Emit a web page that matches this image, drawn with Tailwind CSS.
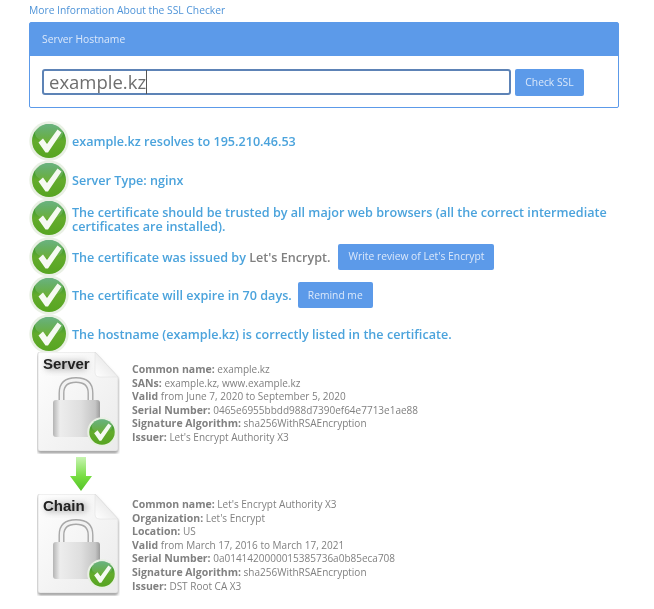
<!DOCTYPE html>
<html>
<head>
<meta charset="utf-8">
<script src="https://cdn.jsdelivr.net/npm/@tailwindcss/browser@4"></script>
</head>
<body class="bg-white font-['Open_Sans',sans-serif] text-[#808080]">
<svg width="0" height="0" class="absolute">
  <defs>
    <linearGradient id="g" x1="0" y1="0" x2="0" y2="1"><stop offset="0" stop-color="#1c8a3c"/><stop offset=".5" stop-color="#63ab2c"/><stop offset="1" stop-color="#57a521"/></linearGradient>
    <linearGradient id="gl" x1="0" y1="0" x2="0" y2="1"><stop offset="0" stop-color="#fff" stop-opacity=".35"/><stop offset="1" stop-color="#fff" stop-opacity=".05"/></linearGradient>
    <linearGradient id="doc" x1="0" y1="0" x2="1" y2="1"><stop offset="0" stop-color="#fefefe"/><stop offset="1" stop-color="#ebebeb"/></linearGradient>
    <linearGradient id="fold" x1="0" y1="1" x2="1" y2="0"><stop offset="0" stop-color="#fff"/><stop offset="1" stop-color="#dcdcdc"/></linearGradient>
    <linearGradient id="body" x1="0" y1="0" x2="1" y2="0"><stop offset="0" stop-color="#b4b4b4"/><stop offset=".15" stop-color="#ededed"/><stop offset=".6" stop-color="#dedede"/><stop offset=".9" stop-color="#c4c4c4"/><stop offset="1" stop-color="#9c9c9c"/></linearGradient>
    <linearGradient id="arrow" x1="0" y1="0" x2="0" y2="1"><stop offset="0" stop-color="#c8f4b2"/><stop offset=".6" stop-color="#74dc3e"/><stop offset="1" stop-color="#56c22a"/></linearGradient>
    <filter id="shadow" x="-20%" y="-20%" width="140%" height="140%"><feGaussianBlur stdDeviation="1.6"/></filter>
    <filter id="soft" x="-30%" y="-60%" width="160%" height="220%"><feGaussianBlur stdDeviation="3"/></filter>
    <symbol id="check" viewBox="0 0 40 40">
      <circle cx="20" cy="20" r="19.7" fill="#e9f0e4"/>
      <circle cx="20" cy="20" r="17" fill="url(#g)"/>
      <ellipse cx="20" cy="12" rx="14" ry="9" fill="url(#gl)"/>
      <path d="M9.500 21.500 L14 17.500 L18 23 L28.500 8.500 L32.500 11.500 L19 31.500 L16.500 31.500 Z" fill="#f6faf2"/>
    </symbol>
    <symbol id="doclock" viewBox="0 0 83 102">
      <path d="M1 3 Q1 1 3 1 L58 1 L81 26 L81 98 Q81 100 79 100 L3 100 Q1 100 1 98 Z" fill="#8a8a8a" transform="translate(0 1)" filter="url(#shadow)"/>
      <path d="M1 2 Q1 0 3 0 L58 0 L81 25 L81 97 Q81 99 79 99 L3 99 Q1 99 1 97 Z" fill="url(#doc)" stroke="#d4d4d4" stroke-width=".6"/>
      <path d="M58 0 L58 20 Q58 25 63 25 L81 25 Z" fill="url(#fold)" stroke="#dddddd" stroke-width=".5"/>
      <rect x="8" y="9" width="42" height="9" rx="4" fill="#666" opacity=".4" filter="url(#soft)"/>
      <path d="M24.500 50 L24.500 41 Q24.500 28 39 28 Q53.500 28 53.500 41 L53.500 50" fill="none" stroke="#a8a8a8" stroke-width="6"/>
      <path d="M24.500 50 L24.500 41 Q24.500 28 39 28 Q53.500 28 53.500 41 L53.500 50" fill="none" stroke="#f2f2f2" stroke-width="3.200"/>
      <rect x="16" y="48" width="47" height="37" rx="3" fill="url(#body)"/>
      <use href="#check" x="50" y="65" width="30" height="30"/>
    </symbol>
  </defs>
</svg>

<main class="px-[29px] pt-[3px] blur-[0.3px]">
  <a class="block text-[10.3px] leading-[15px] text-[#4f94d8]">More Information About the SSL Checker</a>

  <section class="mt-[4px] w-[590px] rounded-[2px] border border-[#5c9ae9]">
    <div class="flex h-[33px] items-center bg-[#5c9ae9] px-[12px] text-[10.3px] text-[#dbe8fa]">Server Hostname</div>
    <div class="flex h-[51px] gap-[4px] pl-[12px] pt-[13px]">
      <div class="flex h-[26px] w-[469px] items-center rounded-[3px] border-2 border-[#5d83b6] px-[5px] text-[18.5px] leading-none text-[#6e6e6e]">example.kz<span class="h-[24px] w-[1px] bg-[#555]"></span></div>
      <button class="flex h-[27px] w-[69px] items-center justify-center rounded-[2px] bg-[#5c9ae9] text-[10.3px] text-[#dbe8fa]">Check SSL</button>
    </div>
  </section>

  <ul class="mt-[14px] text-[12.6px] font-semibold text-[#4ba3dc]">
    <li class="flex h-[38.5px] items-center gap-[3px]">
      <svg class="h-[40px] w-[40px] shrink-0"><use href="#check"/></svg><span class="pt-[3px]">example.kz resolves to 195.210.46.53</span>
    </li>
    <li class="flex h-[38.5px] items-center gap-[3px]">
      <svg class="h-[40px] w-[40px] shrink-0"><use href="#check"/></svg><span class="pt-[3px]">Server Type: nginx</span>
    </li>
    <li class="flex h-[38.5px] items-center gap-[3px]">
      <svg class="h-[40px] w-[40px] shrink-0"><use href="#check"/></svg><span class="pt-[3px] leading-[14px]">The certificate should be trusted by all major web browsers (all the correct intermediate certificates are installed).</span>
    </li>
    <li class="flex h-[38.5px] items-center gap-[3px]">
      <svg class="h-[40px] w-[40px] shrink-0"><use href="#check"/></svg><span class="pt-[3px]">The certificate was issued by <span class="text-[#808080]">Let's Encrypt.</span></span>
      <button class="ml-[5px] flex h-[26px] w-[156px] items-center justify-center rounded-[2px] bg-[#5c9ae9] text-[10.3px] font-normal text-[#dbe8fa]">Write review of Let's Encrypt</button>
    </li>
    <li class="flex h-[38.5px] items-center gap-[3px]">
      <svg class="h-[40px] w-[40px] shrink-0"><use href="#check"/></svg><span class="pt-[3px]">The certificate will expire in 70 days.</span>
      <button class="ml-[3px] flex h-[26px] w-[75px] items-center justify-center rounded-[2px] bg-[#5c9ae9] text-[10.3px] font-normal text-[#dbe8fa]">Remind me</button>
    </li>
    <li class="flex h-[38.5px] items-center gap-[3px]">
      <svg class="h-[40px] w-[40px] shrink-0"><use href="#check"/></svg><span class="pt-[3px]">The hostname (example.kz) is correctly listed in the certificate.</span>
    </li>
  </ul>

  <section class="mt-[-1px] pl-[8px] text-[10px] leading-[13.6px]">
    <div class="flex h-[102px] gap-[12px]">
      <svg class="h-[102px] w-[83px] shrink-0"><use href="#doclock"/><text x="6" y="17" font-family="Liberation Sans" font-weight="700" font-size="15" fill="#222">Server</text></svg>
      <div class="pt-[11px]">
        <div><b class="text-[10.5px]">Common name:</b> example.kz</div>
        <div><b class="text-[10.5px]">SANs:</b> example.kz, www.example.kz</div>
        <div><b class="text-[10.5px]">Valid</b> from June 7, 2020 to September 5, 2020</div>
        <div><b class="text-[10.5px]">Serial Number:</b> 0465e6955bbdd988d7390ef64e7713e1ae88</div>
        <div><b class="text-[10.5px]">Signature Algorithm:</b> sha256WithRSAEncryption</div>
        <div><b class="text-[10.5px]">Issuer:</b> Let's Encrypt Authority X3</div>
      </div>
    </div>
    <svg class="mt-[3px] ml-[33px] block h-[34px] w-[22px]" viewBox="0 0 22 34"><path d="M6 0 H16 V19 H22 L11 34 L0 19 H6 Z" fill="url(#arrow)"/></svg>
    <div class="mt-[3px] flex h-[102px] gap-[12px]">
      <svg class="h-[102px] w-[83px] shrink-0"><use href="#doclock"/><text x="6" y="17" font-family="Liberation Sans" font-weight="700" font-size="15" fill="#222">Chain</text></svg>
      <div class="pt-[4px]">
        <div><b class="text-[10.5px]">Common name:</b> Let's Encrypt Authority X3</div>
        <div><b class="text-[10.5px]">Organization:</b> Let's Encrypt</div>
        <div><b class="text-[10.5px]">Location:</b> US</div>
        <div><b class="text-[10.5px]">Valid</b> from March 17, 2016 to March 17, 2021</div>
        <div><b class="text-[10.5px]">Serial Number:</b> 0a0141420000015385736a0b85eca708</div>
        <div><b class="text-[10.5px]">Signature Algorithm:</b> sha256WithRSAEncryption</div>
        <div><b class="text-[10.5px]">Issuer:</b> DST Root CA X3</div>
      </div>
    </div>
  </section>
</main>
</body>
</html>
